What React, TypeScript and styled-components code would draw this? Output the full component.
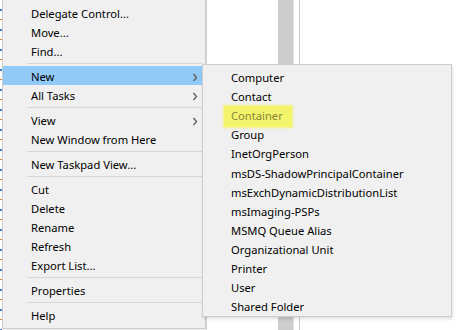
import styled, { createGlobalStyle } from 'styled-components';

const GlobalStyle = createGlobalStyle`
  html, body {
    margin: 0;
    padding: 0;
    background: #ffffff;
  }
  body {
    font-family: 'Segoe UI', 'Noto Sans', 'Open Sans', sans-serif;
    font-size: 11.2px;
  }
`;

const Screen = styled.div`
  position: relative;
  width: 456px;
  height: 330px;
  overflow: hidden;
  background: #ffffff;
`;

const Backdrop = styled.div`
  display: flex;
  height: 100%;
`;

const TreePane = styled.div`
  flex: 0 0 206px;
  border-right: 1px solid #d4d4d4;
  background: #f0f0f0;
  display: flex;
`;

const TreeStrip = styled.div`
  width: 2px;
  background: repeating-linear-gradient(
    to bottom,
    #ffffff 0px,
    #ffffff 9px,
    #3b7fd0 9px,
    #3b7fd0 11px,
    #ffffff 11px,
    #ffffff 19px,
    #d98a3a 19px,
    #d98a3a 20px
  );
`;

const Gap = styled.div`
  flex: 0 0 71px;
  background: #ffffff;
`;

const ScrollTrack = styled.div`
  flex: 0 0 15px;
  background: #cdcdcd;
`;

const Splitter = styled.div`
  flex: 0 0 5px;
  border-left: 1px solid #e3e3e3;
  border-right: 1px solid #c9c9c9;
  background: #ffffff;
`;

const ResultPane = styled.div`
  flex: 1;
  background: #ffffff;
`;

const Menu = styled.div`
  position: absolute;
  left: 2px;
  top: -1px;
  width: 202px;
  background: #f0f0f0;
  border: 1px solid #cccccc;
  padding: 3px 0 4px;
`;

const SubMenu = styled.div`
  position: absolute;
  left: 202px;
  top: 64px;
  width: 248px;
  background: #f0f0f0;
  border: 1px solid #cccccc;
  box-shadow: 1px 2px 3px rgba(0, 0, 0, 0.12);
  padding: 2px 0 1px;
`;

const Item = styled.div<{ $active?: boolean }>`
  box-sizing: border-box;
  display: flex;
  align-items: center;
  height: 19px;
  padding: 3px 7px 0 28px;
  color: #000000;
  white-space: nowrap;
  background: ${(p) => (p.$active ? '#91c9f7' : 'transparent')};
`;

const SubItem = styled(Item)`
  height: 19.1px;
`;

const Label = styled.span`
  flex: 1;
  line-height: 16px;
`;

const Separator = styled.div`
  height: 6px;
  display: flex;
  align-items: center;
  padding: 0 3px 0 24px;

  &::after {
    content: '';
    flex: 1;
    height: 1px;
    background: #d7d7d7;
  }
`;

const Marker = styled.span`
  display: inline-block;
  margin-left: -7px;
  padding: 2px 9px 3px 7px;
  background: #f4f46c;
  box-shadow: 0 0 2px 1px rgba(244, 244, 108, 0.8);
  color: #87873a;
  line-height: 16px;
`;

const Chevron = () => (
  <svg width="6" height="9" viewBox="0 0 6 9">
    <path d="M1.5 1 L4.5 4.5 L1.5 8" fill="none" stroke="#5c5c5c" strokeWidth="1.3" />
  </svg>
);

type Entry = { label: string; sub?: boolean; active?: boolean } | 'sep';

const mainItems: Entry[] = [
  { label: 'Delegate Control...' },
  { label: 'Move...' },
  { label: 'Find...' },
  'sep',
  { label: 'New', sub: true, active: true },
  { label: 'All Tasks', sub: true },
  'sep',
  { label: 'View', sub: true },
  { label: 'New Window from Here' },
  'sep',
  { label: 'New Taskpad View...' },
  'sep',
  { label: 'Cut' },
  { label: 'Delete' },
  { label: 'Rename' },
  { label: 'Refresh' },
  { label: 'Export List...' },
  'sep',
  { label: 'Properties' },
  'sep',
  { label: 'Help' },
];

const newItems = [
  'Computer',
  'Contact',
  'Container',
  'Group',
  'InetOrgPerson',
  'msDS-ShadowPrincipalContainer',
  'msExchDynamicDistributionList',
  'msImaging-PSPs',
  'MSMQ Queue Alias',
  'Organizational Unit',
  'Printer',
  'User',
  'Shared Folder',
];

const App = () => {
  return (
    <Screen>
      <GlobalStyle />
      <Backdrop>
        <TreePane>
          <TreeStrip />
        </TreePane>
        <Gap />
        <ScrollTrack />
        <Splitter />
        <ResultPane />
      </Backdrop>

      <Menu>
        {mainItems.map((entry, i) =>
          entry === 'sep' ? (
            <Separator key={i} />
          ) : (
            <Item key={i} $active={entry.active}>
              <Label>{entry.label}</Label>
              {entry.sub && <Chevron />}
            </Item>
          )
        )}
      </Menu>

      <SubMenu>
        {newItems.map((name) => (
          <SubItem key={name}>
            {name === 'Container' ? <Marker>{name}</Marker> : <Label>{name}</Label>}
          </SubItem>
        ))}
      </SubMenu>
    </Screen>
  );
};

export default App;
